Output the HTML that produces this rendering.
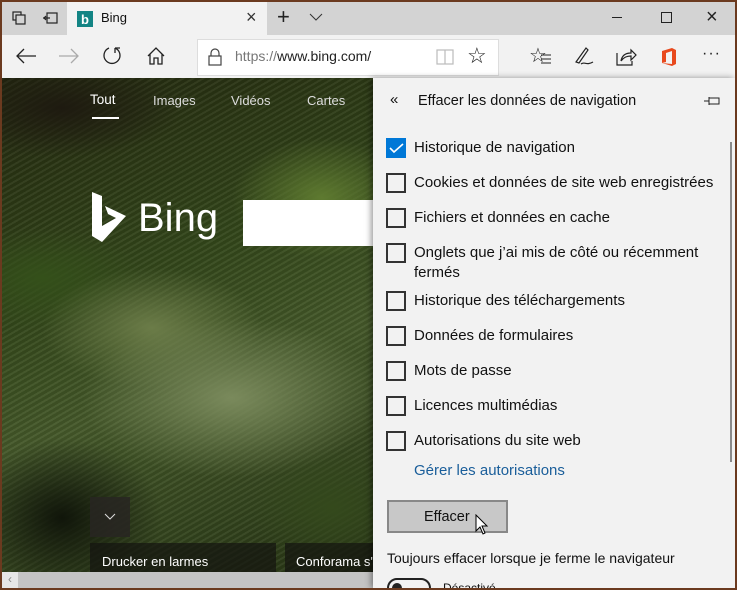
<!DOCTYPE html>
<html><head><meta charset="utf-8"><style>
*{margin:0;padding:0;box-sizing:border-box}
body{width:737px;height:590px;overflow:hidden;background:#6b3a1f;font-family:"Liberation Sans",sans-serif;position:relative}
.a{position:absolute}
#win{left:2px;top:2px;width:733px;height:586px;background:#f2f2f2;overflow:hidden}
#title{left:0;top:0;width:733px;height:33px;background:#d3d3d3}
#tab{left:65px;top:0;width:200px;height:33px;background:#f2f2f2}
#tool{left:0;top:33px;width:733px;height:43px;background:#f2f2f2}
#addr{left:195px;top:37px;width:302px;height:37px;background:#fff;border:1px solid #ddd}
#bg{left:0;top:76px;width:372px;height:494px;background:
radial-gradient(ellipse 120px 50px at 60px 30px,#1e1a10 0%,transparent 100%),
radial-gradient(ellipse 150px 80px at 230px 320px,#7a8a5c 0%,transparent 100%),
radial-gradient(ellipse 110px 60px at 150px 250px,#6b7c48 0%,transparent 100%),
radial-gradient(ellipse 90px 60px at 320px 120px,#5e7a30 0%,transparent 100%),
radial-gradient(ellipse 100px 80px at 60px 440px,#10150a 0%,transparent 100%),
radial-gradient(ellipse 80px 60px at 330px 430px,#34491c 0%,transparent 100%),
radial-gradient(ellipse 100px 50px at 40px 200px,#34501a 0%,transparent 100%),
repeating-linear-gradient(150deg,rgba(255,255,255,.05) 0 2px,rgba(0,0,0,.08) 2px 5px),
linear-gradient(160deg,#23280f 0%,#34481b 40%,#45592a 60%,#263414 100%)}
#panel{left:371px;top:76px;width:362px;height:510px;background:#f2f2f2;box-shadow:-2px 0 6px rgba(0,0,0,.4)}
.t{font-size:15px;color:#111;position:absolute;white-space:nowrap}
.cb{position:absolute;left:13px;width:20px;height:20px;border:2px solid #333}
.wt{color:#fff;position:absolute;font-size:13px}
svg{position:absolute}
</style></head><body>
<div id="win" class="a">
<div id="title" class="a"></div>
<div id="tab" class="a"></div>
<svg style="left:10px;top:9px" width="14" height="14" fill="none" stroke="#222" stroke-width="1.2"><rect x="1" y="1" width="8" height="8"/><rect x="4" y="4" width="9" height="9" fill="#d3d3d3"/></svg>
<svg style="left:40px;top:10px" width="16" height="12" fill="none" stroke="#222" stroke-width="1.2"><rect x="5" y="1" width="10" height="10"/><path d="M1 6h7M4 4l-2 2 2 2"/></svg>
<div class="a" style="left:75px;top:9px;width:16px;height:16px;background:#138484"></div>
<div class="a" style="left:79px;top:10px;color:#fff;font-size:13px;font-weight:bold">b</div>
<div class="a t" style="left:99px;top:8px;font-size:13px">Bing</div>
<div class="a" style="left:244px;top:5px;font-size:18px;color:#333">×</div>
<div class="a" style="left:275px;top:2px;font-size:22px;color:#222">+</div>
<svg style="left:307px;top:11px" width="14" height="8" fill="none" stroke="#333"><path d="M1 1l6 6 6-6"/></svg>
<div class="a" style="left:610px;top:15px;width:10px;height:1px;background:#222"></div>
<div class="a" style="left:659px;top:10px;width:11px;height:11px;border:1px solid #222"></div>
<div class="a" style="left:704px;top:4px;font-size:20px;color:#222">×</div>
<div id="tool" class="a"></div>
<svg style="left:13px;top:45px" width="22" height="18" fill="none" stroke="#222" stroke-width="1.3"><path d="M21 9H2M9 2L2 9l7 7"/></svg>
<svg style="left:56px;top:45px" width="22" height="18" fill="none" stroke="#aaa" stroke-width="1.3"><path d="M1 9h19M13 2l7 7-7 7"/></svg>
<svg style="left:99px;top:44px" width="22" height="22" fill="none" stroke="#222" stroke-width="1.3"><path d="M8 2A8 8 0 1 0 14 2"/><path d="M14 2v5M14 2h5"/></svg>
<svg style="left:144px;top:44px" width="20" height="20" fill="none" stroke="#222" stroke-width="1.3"><path d="M2 10L10 2l8 8M4 8v10h4v-6h4v6h4V8"/></svg>
<div id="addr" class="a"></div>
<svg style="left:206px;top:46px" width="14" height="18" fill="none" stroke="#444" stroke-width="1.2"><rect x="1" y="8" width="12" height="9"/><path d="M3 8V5a4 4 0 0 1 8 0v3"/></svg>
<div class="a t" style="left:233px;top:46px;font-size:14px;color:#777">https://<span style="color:#222">www.bing.com/</span></div>
<svg style="left:434px;top:47px" width="18" height="16" fill="none" stroke="#bbb" stroke-width="1.2"><rect x="1" y="1" width="16" height="14"/><path d="M9 1v14"/></svg>
<div class="a" style="left:465px;top:41px;font-size:22px;color:#222">☆</div>
<div class="a" style="left:527px;top:41px;font-size:20px;color:#222">☆</div>
<svg style="left:539px;top:52px" width="10" height="10" stroke="#222"><path d="M0 1h10M0 5h10M0 9h10"/></svg>
<svg style="left:570px;top:44px" width="22" height="22" fill="none" stroke="#222" stroke-width="1.2"><path d="M4 16L14 2l2 2L7 17zM9 18c4-3 5 2 12-2"/></svg>
<svg style="left:613px;top:45px" width="22" height="20" fill="none" stroke="#222" stroke-width="1.2"><path d="M2 6v12h15v-4M6 14c1-6 5-8 10-8V3l5 5-5 5V9c-4 0-7 1-10 5"/></svg>
<svg style="left:658px;top:45px" width="18" height="20"><path d="M2 4L12 1l4 2v14l-4 2-10-3 10 1V4L6 6v9L2 16z" fill="#e8491d"/></svg>
<div class="a" style="left:700px;top:43px;font-size:16px;color:#222;letter-spacing:1px">···</div>
<div id="bg" class="a"></div>
<div class="wt" style="left:88px;top:90px;font-size:13.5px">Tout</div>
<div class="a" style="left:90px;top:115px;width:27px;height:2px;background:#fff"></div>
<div class="wt" style="left:151px;top:91px;color:#ddd">Images</div>
<div class="wt" style="left:229px;top:91px;color:#ddd">Vidéos</div>
<div class="wt" style="left:305px;top:91px;color:#ddd">Cartes</div>
<svg style="left:88px;top:190px" width="40" height="52"><path d="M2 0l10 4v30l14-8-8-4-3-8 21 10L12 50 2 44z" fill="#fff"/></svg>
<div class="wt" style="left:136px;top:194px;font-size:40px">Bing</div>
<div class="a" style="left:241px;top:198px;width:131px;height:46px;background:#fff"></div>
<div class="a" style="left:88px;top:495px;width:40px;height:40px;background:rgba(40,38,34,.85)"></div>
<svg style="left:102px;top:511px" width="12" height="7" fill="none" stroke="#ddd"><path d="M1 1l5 5 5-5"/></svg>
<div class="a" style="left:88px;top:541px;width:186px;height:32px;background:rgba(20,20,15,.7)"></div>
<div class="wt" style="left:100px;top:552px">Drucker en larmes</div>
<div class="a" style="left:283px;top:541px;width:89px;height:32px;background:rgba(20,20,15,.7)"></div>
<div class="wt" style="left:294px;top:552px">Conforama s'é</div>
<div class="a" style="left:0;top:570px;width:372px;height:16px;background:#c4c4c4"></div>
<div class="a" style="left:0;top:570px;width:16px;height:16px;background:#e6e6e6;color:#888;font-size:12px;text-align:center">‹</div>
<div id="panel" class="a">
<div class="t" style="left:17px;top:13px;font-size:15px">«</div>
<div class="t" style="left:45px;top:15px;font-size:14.5px">Effacer les données de navigation</div>
<svg style="left:330px;top:18px" width="18" height="10" fill="none" stroke="#222"><path d="M1 5h5M6 1v8M6 2h10v6H6"/></svg>
<div class="a" style="left:357px;top:64px;width:2px;height:320px;background:#8a8a8a"></div>
<div class="cb" style="top:60px;background:#0078d7;border-color:#0078d7"></div>
<svg style="left:16px;top:65px" width="15" height="11" fill="none" stroke="#fff" stroke-width="1.6"><path d="M1 5l4 4 9-8"/></svg>
<div class="t" style="left:41px;top:61px">Historique de navigation</div>
<div class="cb" style="top:95px"></div><div class="t" style="left:41px;top:96px">Cookies et données de site web enregistrées</div>
<div class="cb" style="top:130px"></div><div class="t" style="left:41px;top:131px">Fichiers et données en cache</div>
<div class="cb" style="top:165px"></div><div class="t" style="left:41px;top:166px">Onglets que j’ai mis de côté ou récemment</div>
<div class="t" style="left:41px;top:186px">fermés</div>
<div class="cb" style="top:213px"></div><div class="t" style="left:41px;top:214px">Historique des téléchargements</div>
<div class="cb" style="top:248px"></div><div class="t" style="left:41px;top:249px">Données de formulaires</div>
<div class="cb" style="top:283px"></div><div class="t" style="left:41px;top:284px">Mots de passe</div>
<div class="cb" style="top:318px"></div><div class="t" style="left:41px;top:319px">Licences multimédias</div>
<div class="cb" style="top:353px"></div><div class="t" style="left:41px;top:354px">Autorisations du site web</div>
<div class="t" style="left:41px;top:384px;color:#1a5e9a">Gérer les autorisations</div>
<div class="a" style="left:14px;top:422px;width:121px;height:33px;background:#c8c8c8;border:2px solid #888"></div>
<div class="t" style="left:51px;top:431px;font-size:14.5px">Effacer</div>
<svg style="left:102px;top:436px" width="14" height="22"><path d="M1 1v16l4-4 3 7 2-1-3-7h5z" fill="#fff" stroke="#000"/></svg>
<div class="t" style="left:14px;top:472px;font-size:14px">Toujours effacer lorsque je ferme le navigateur</div>
<div class="a" style="left:14px;top:500px;width:44px;height:20px;border:2px solid #222;border-radius:10px"></div>
<div class="a" style="left:19px;top:505px;width:10px;height:10px;border-radius:5px;background:#222"></div>
<div class="t" style="left:70px;top:503px;font-size:12px">Désactivé</div>
</div>
</div>
</body></html>
